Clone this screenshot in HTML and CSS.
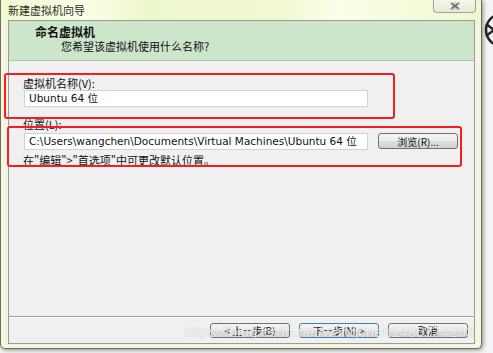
FILE: index.html
```html
<!DOCTYPE html>
<html lang="zh-CN">
<head>
  <meta charset="UTF-8">
  <title>新建虚拟机向导</title>
  <link rel="stylesheet" href="styles.css">
</head>
<body>
  <!-- 背后的桌面一角 -->
  <svg class="behind" width="20" height="70" viewBox="0 0 20 70">
    <path d="M20 14 A16 16 0 0 0 20 46" fill="none" stroke="#222" stroke-width="2.5"/>
    <path d="M4 24 L12 30 L4 36" fill="none" stroke="#222" stroke-width="2.5"/>
  </svg>

  <div class="window">
    <div class="titlebar">
      <span class="title">新建虚拟机向导</span>
      <div class="close">
        <svg width="14" height="8" viewBox="0 0 14 8">
          <path d="M3 1 L11 7 M11 1 L3 7" stroke="#6a6a6a" stroke-width="1.6"/>
          <path d="M2 1 L12 1 M2 7 L12 7" stroke="#b8b8b8" stroke-width="1"/>
        </svg>
      </div>
    </div>

    <div class="client">
      <div class="header">
        <div class="header-title">命名虚拟机</div>
        <div class="header-sub">您希望该虚拟机使用什么名称?</div>
      </div>

      <div class="form">
        <div class="field-label">虚拟机名称(V):</div>
        <div class="textbox">Ubuntu 64 位</div>

        <div class="field-label second">位置(L):</div>
        <div class="path-row">
          <div class="textbox">C:\Users\wangchen\Documents\Virtual Machines\Ubuntu 64 位</div>
          <button class="btn browse">浏览(R)...</button>
        </div>
        <div class="hint">在"编辑"&gt;"首选项"中可更改默认位置。</div>
      </div>

      <div class="footer">
        <button class="btn">&lt; 上一步(B)</button>
        <button class="btn default">下一步(N) &gt;</button>
        <button class="btn">取消</button>
      </div>
    </div>
  </div>

  <!-- 标注框 -->
  <div class="mark mark-name"></div>
  <div class="mark mark-path"></div>

  <div class="watermark">https://blog.csdn.net/wangchen1486774203</div>
</body>
</html>
```

FILE: styles.css
```css
* {
  box-sizing: border-box;
}
body {
  margin: 0;
  width: 493px;
  height: 353px;
  overflow: hidden;
  position: relative;
  background: #f4f4f4;
  font-family: "Noto Sans CJK SC", "DejaVu Sans", sans-serif;
  color: #111;
}
.behind {
  position: absolute;
  left: 482px;
  top: 0;
}
.window {
  width: 482px;
  height: 349px;
  display: flex;
  flex-direction: column;
  background: #f5f6e2;
  border: 1px solid #6e705c;
  border-top: none;
  border-radius: 0 0 5px 5px;
  box-shadow: 1px 1px 4px rgba(0, 0, 0, 0.45);
  position: relative;
}
.titlebar {
  height: 20px;
  display: flex;
  justify-content: space-between;
  align-items: flex-start;
  background: linear-gradient(90deg, #eef8d2 0%, #fbffe6 18%, #edf7cc 30%, #f1f9d4 60%, #fbffe8 70%, #eef8d0 100%);
}
.title {
  font-size: 11px;
  line-height: 18px;
  padding: 1px 0 0 7px;
  color: #2a2a2a;
}
.close {
  width: 43px;
  height: 13px;
  margin-right: 5px;
  border: 1px solid #9fa88e;
  border-top: none;
  border-radius: 0 0 4px 4px;
  background: linear-gradient(#f4f8ea, #e6ecd6);
  display: flex;
  justify-content: center;
  align-items: center;
}
.client {
  flex: 1;
  margin: 0 6px 4px 7px;
  border: 1px solid #9c9c94;
  background: #f0f0f0;
  display: flex;
  flex-direction: column;
}
.header {
  height: 40px;
  background: #cce6cc;
  border-bottom: 1px solid #b4c4b4;
  padding: 4px 0 0 26px;
}
.header-title {
  font-size: 12px;
  font-weight: bold;
  line-height: 14px;
}
.header-sub {
  font-size: 11px;
  line-height: 14px;
  padding-left: 26px;
}
.form {
  flex: 1;
  padding: 15px 0 0 14px;
}
.field-label {
  font-size: 11px;
  line-height: 14px;
}
.field-label.second {
  margin-top: 10px;
}
.textbox {
  width: 344px;
  height: 17px;
  margin: 0 0 0 1px;
  padding-left: 4px;
  background: #fff;
  border: 1px solid #cdd3da;
  font-family: "DejaVu Sans", "Noto Sans CJK SC", sans-serif;
  font-size: 10.5px;
  line-height: 15px;
  white-space: nowrap;
  overflow: hidden;
}
.path-row {
  display: flex;
  align-items: flex-start;
  gap: 10px;
  margin-top: 2px;
}
.btn {
  width: 80px;
  height: 15px;
  padding: 0;
  border: 1px solid #707070;
  border-radius: 3px;
  background: linear-gradient(#f4f4f4, #ececec 50%, #dedede 51%, #d2d2d2);
  font-family: "Noto Sans CJK SC", sans-serif;
  font-size: 10px;
  line-height: 13px;
  color: #111;
}
.browse {
  height: 16px;
}
.hint {
  font-size: 11px;
  line-height: 14px;
  margin-top: 3px;
}
.footer {
  height: 27px;
  border-top: 1px solid #a0a0a0;
  box-shadow: inset 0 1px 0 #fff;
  display: flex;
  justify-content: flex-end;
  gap: 9px;
  padding: 6px 6px 0 0;
}
.btn.default {
  border-color: #3c7fb1;
}
.mark {
  position: absolute;
  border: 2px solid #f51d1d;
  border-radius: 3px;
}
.mark-name {
  left: 4px;
  top: 73px;
  width: 391px;
  height: 46px;
}
.mark-path {
  left: 7px;
  top: 126px;
  width: 455px;
  height: 41px;
}
.watermark {
  position: absolute;
  left: 184px;
  top: 323px;
  font-family: "Liberation Sans", sans-serif;
  font-size: 15px;
  color: rgba(255, 255, 255, 0.8);
  text-shadow: 0 0 1px rgba(0, 0, 0, 0.25);
  white-space: nowrap;
}
```
